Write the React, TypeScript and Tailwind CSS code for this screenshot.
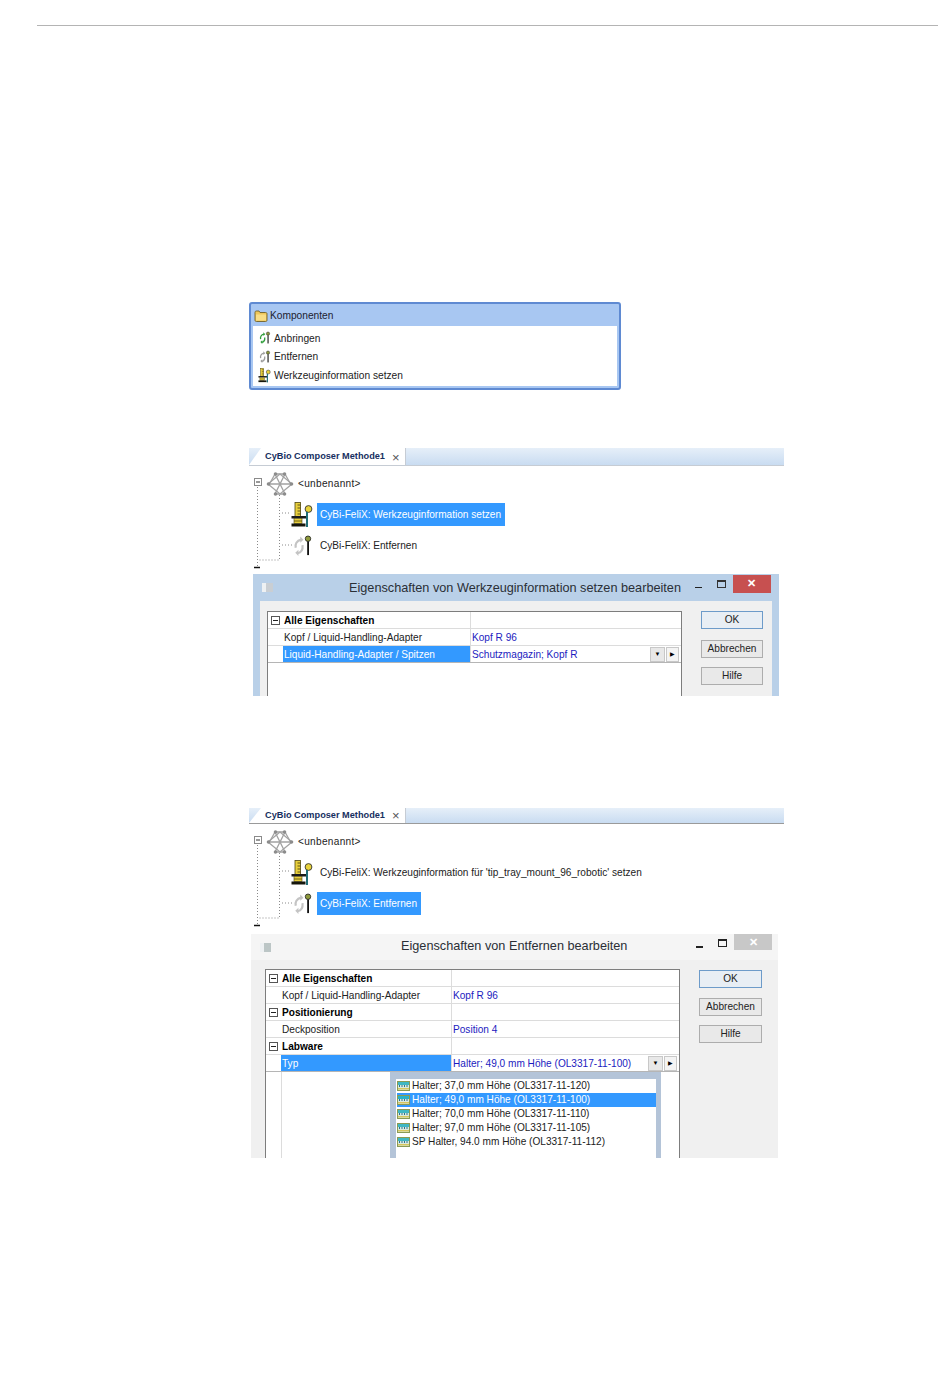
import React from 'react'

const font = "font-['Liberation_Sans',sans-serif]"

const PinIcon = ({ head = '#8f9a3c', stem = '#111111' }: { head?: string; stem?: string }) => (
  <>
    <circle cx="16.5" cy="4" r="3" fill={head} stroke="#222" strokeWidth="0.9" />
    <rect x="15.6" y="7" width="2" height="15" fill={stem} />
  </>
)

const ToolInfoIcon = ({ className }: { className: string }) => (
  <svg viewBox="0 0 22 26" className={className}>
    <rect x="4" y="0.500" width="5.500" height="14" fill="#e8cf3c" stroke="#4f4610" strokeWidth="0.8" />
    <path d="M6.500 3h3M6.500 6h3M6.500 9h3M6.500 12h3" stroke="#4f4610" strokeWidth="0.9" />
    <rect x="0.500" y="14" width="15" height="2.500" fill="#1a1a1a" />
    <rect x="3" y="16.500" width="8" height="5" fill="#e8cf3c" stroke="#4f4610" strokeWidth="0.6" />
    <path d="M3 19h8" stroke="#4f4610" strokeWidth="0.8" />
    <rect x="0.500" y="21.500" width="14" height="3" fill="#16160c" />
    <circle cx="17.500" cy="7" r="3.400" fill="#e8d23a" stroke="#333" strokeWidth="0.9" />
    <rect x="15" y="10" width="2" height="15" fill="#1f6e78" />
  </svg>
)

const RemoveIcon = ({ className, tone = '#c4c4c4' }: { className: string; tone?: string }) => (
  <svg viewBox="0 0 22 24" className={className}>
    <path d="M9 5C4 6 2 10 3 14" fill="none" stroke={tone} strokeWidth="2.4" />
    <path d="M8 1.500l3.500 3.500L8 8.500z" fill={tone} />
    <path d="M5 20c5-1 6-4 5.500-9" fill="none" stroke={tone} strokeWidth="2.4" />
    <path d="M6 23l-3.500-3.500L6 16z" fill={tone} />
    <PinIcon />
  </svg>
)

const NetworkIcon = () => (
  <svg viewBox="0 0 28 26" className="w-[28px] h-[26px] shrink-0">
    <g fill="none" stroke="#a3a3a3" strokeWidth="1.3">
      <path d="M14 3L2 13l12 10 12-10z" />
      <path d="M9 3h10M9 23h10M2 13h24M9 3l5 10 5-10M9 23l5-10 5 10M9 3L4 12M19 3l5 9" />
    </g>
    <g fill="#8c8c8c">
      <circle cx="9.500" cy="3" r="1.800" />
      <circle cx="18.500" cy="3" r="1.800" />
      <circle cx="9.500" cy="23" r="1.800" />
      <circle cx="18.500" cy="23" r="1.800" />
      <circle cx="2.500" cy="13" r="1.800" />
      <circle cx="25.500" cy="13" r="1.800" />
    </g>
  </svg>
)

const FolderIcon = () => (
  <svg viewBox="0 0 14 12" className="w-[14px] h-[12px] shrink-0">
    <path d="M1 2.500C1 1.500 1.500 1 2.500 1H5l1 1.500h5.500c1 0 1.500.5 1.500 1.500v6c0 1-.5 1.500-1.500 1.500h-9C1.500 11.500 1 11 1 10z" fill="#eec65a" stroke="#6f6128" strokeWidth="0.9" />
    <rect x="2" y="4.500" width="10" height="6" fill="#f8dd85" />
  </svg>
)

const HolderIcon = ({ active }: { active?: boolean }) => (
  <svg viewBox="0 0 13 10" className="w-[13px] h-[10px] shrink-0">
    <rect x="0.500" y="0.500" width="12" height="9" fill="#d9eadf" stroke="#8a9a55" />
    <rect x="1" y="1" width="11" height="3" fill={active ? '#27b3c9' : '#3fb7c4'} />
    <path d="M2.500 4v2M5 4v2M7.500 4v2M10 4v2" stroke="#31708f" />
    <rect x="1" y="7" width="11" height="1.500" fill="#d7c65e" />
  </svg>
)

const Palette = () => {
  const items = [
    { label: 'Anbringen', icon: <RemoveIcon className="w-[12px] h-[14px]" tone="#2f9d3a" /> },
    { label: 'Entfernen', icon: <RemoveIcon className="w-[12px] h-[14px]" tone="#9c9c9c" /> },
    { label: 'Werkzeuginformation setzen', icon: <ToolInfoIcon className="w-[13px] h-[15px]" /> },
  ]
  return (
    <div className="w-[372px] h-[88px] rounded-[3px] border-2 border-[#5f8ad2] bg-[#a8c7f2] flex flex-col">
      <div className="h-[22px] shrink-0 flex items-center gap-[2px] pl-[3px] pt-[2px] text-[10.2px] text-[#1c2230]">
        <FolderIcon />
        Komponenten
      </div>
      <div className="mx-[2px] h-[60px] bg-white flex flex-col pt-[3px] pl-[5px]">
        {items.map((item) => (
          <div key={item.label} className="h-[18.500px] flex items-center gap-[3px] text-[10.2px] text-[#222]">
            <span className="w-[13px] flex justify-center">{item.icon}</span>
            {item.label}
          </div>
        ))}
      </div>
    </div>
  )
}

const ComposerTree = ({ toolLabel, selected, compact }: { toolLabel: string; selected: 'tool' | 'remove'; compact?: boolean }) => (
  <div className="w-[535px]">
    <div className={`flex bg-gradient-to-b from-[#e6eff9] to-[#c9dcf1] border-b ${compact ? 'h-[16px] border-[#9a9a9a]' : 'h-[18px] border-[#c6ccd4]'}`}>
      <div className={`w-[157px] bg-white flex items-center pl-[16px] [clip-path:polygon(12px_0,100%_0,100%_100%,0_100%)] border-r border-[#c6ccd4] ${compact ? 'h-[15px]' : 'h-[17px] pt-px'}`}>
        <span className="text-[9.2px] font-bold text-[#17305f]">CyBio Composer Methode1</span>
        <span className="ml-[7px] text-[13px] leading-none text-[#555]">×</span>
      </div>
    </div>
    <div className="relative h-[108px] pt-[2px] text-[10.1px] text-[#222]">
      <svg viewBox="0 0 60 108" className="absolute left-0 top-0 w-[60px] h-[108px]">
        <g fill="none" stroke="#8a8a8a" strokeDasharray="1 2">
          <path d="M8.500 21V100M30.500 29V94H9M33 47H42M33 79H44" />
        </g>
        <rect x="5.500" y="12.500" width="7" height="7" fill="#fff" stroke="#8a8a8a" />
        <path d="M7 16h4" stroke="#333" />
        <path d="M5 101.500h6" stroke="#111" strokeWidth="1.500" />
      </svg>
      <div className="relative h-[31px] flex items-center pl-[17px]">
        <NetworkIcon />
        <span className="ml-[4px] tracking-[0.3px]">&lt;unbenannt&gt;</span>
      </div>
      <div className="relative h-[31px] flex items-center pl-[42px]">
        <ToolInfoIcon className="w-[22px] h-[26px] shrink-0" />
        <span className={`ml-[4px] h-[23px] flex items-center pl-[3px] pr-[4px] ${selected === 'tool' ? 'bg-[#3399ff] text-white' : ''}`}>
          {toolLabel}
        </span>
      </div>
      <div className="relative h-[31px] flex items-center pl-[44px]">
        <RemoveIcon className="w-[20px] h-[22px] shrink-0" />
        <span className={`ml-[4px] h-[23px] flex items-center pl-[3px] pr-[4px] ${selected === 'remove' ? 'bg-[#3399ff] text-white' : ''}`}>
          CyBi-FeliX: Entfernen
        </span>
      </div>
    </div>
  </div>
)

type Row = { name: string; value?: string; head?: boolean; active?: boolean; dropdown?: boolean }

const PropertyGrid = ({ rows, nameClass, className, children }: { rows: Row[]; nameClass: string; className: string; children?: React.ReactNode }) => (
  <div className={`relative bg-white border border-b-0 border-[#7d7d7d] text-[10.1px] text-[#222] ${className}`}>
    {rows.map((row) => (
      <div key={row.name} className={`h-[17px] flex border-b ${row.active ? 'border-[#b5b5b5]' : 'border-[#dcdcdc]'}`}>
        <div className="w-[15px] shrink-0 flex items-center justify-center">
          {row.head && (
            <span className="w-[9px] h-[9px] border border-[#555] flex items-center justify-center">
              <span className="w-[5px] h-px bg-[#222]" />
            </span>
          )}
        </div>
        <div className={`${nameClass} shrink-0 pt-px flex items-center border-r border-[#dcdcdc] ${row.head ? 'font-bold text-black' : ''} ${row.active ? 'bg-[#3399ff] text-white' : ''}`}>
          {row.name}
        </div>
        <div className="flex-1 pl-px pt-px flex items-center text-[#1c1cc0]">
          {row.value}
          {row.dropdown && (
            <div className="ml-auto mr-[2px] flex gap-px">
              <span className="w-[15px] h-[15px] bg-[#e8e8e8] border border-[#c8c8c8] flex items-center justify-center text-[6px] text-black">▼</span>
              <span className="w-[13px] h-[15px] bg-[#f4f4f4] border border-[#c8c8c8] flex items-center justify-center text-[6px] text-black">▶</span>
            </div>
          )}
        </div>
      </div>
    ))}
    {children}
  </div>
)

const DialogButtons = ({ gaps, className }: { gaps: string[]; className: string }) => (
  <div className={`flex flex-col ${className}`}>
    {['OK', 'Abbrechen', 'Hilfe'].map((label, i) => (
      <div
        key={label}
        className={`${gaps[i]} h-[18px] flex items-center justify-center text-[10.1px] text-[#222] border ${i === 0 ? 'bg-[#e8eef4] border-[#6d9bc9]' : 'bg-[#e9e9e9] border-[#adadad]'}`}
      >
        {label}
      </div>
    ))}
  </div>
)

const holders = [
  'Halter; 37,0 mm Höhe (OL3317-11-120)',
  'Halter; 49,0 mm Höhe (OL3317-11-100)',
  'Halter; 70,0 mm Höhe (OL3317-11-110)',
  'Halter; 97,0 mm Höhe (OL3317-11-105)',
  'SP Halter, 94.0 mm Höhe (OL3317-11-112)',
]

export default function App() {
  return (
    <div className={`w-[950px] h-[1398px] bg-white overflow-hidden pt-[25px] ${font}`}>
      <div className="ml-[37px] w-[901px] h-px bg-[#b4b4b4]" />

      <div className="ml-[249px] mt-[276px]">
        <Palette />
      </div>

      <div className="ml-[249px] mt-[58px]">
        <ComposerTree toolLabel="CyBi-FeliX: Werkzeuginformation setzen" selected="tool" />
      </div>

      {/* Werkzeuginformation dialog */}
      <div className="ml-[253px] w-[526px] h-[122px] bg-[#b9d0e8] flex flex-col">
        <div className="h-[27px] shrink-0 flex items-center">
          <span className="ml-[9px] w-[11px] h-[9px] bg-[#c9ced3] border-l-[4px] border-[#eef1f3]" />
          <span className="ml-[76px] pt-[2px] text-[12.7px] text-[#2a2f36]">Eigenschaften von Werkzeuginformation setzen bearbeiten</span>
          <span className="ml-[14px] w-[7px] h-px bg-[#222]" />
          <span className="ml-[15px] w-[9px] h-[8px] -mt-[8px] border border-[#333] border-t-2" />
          <span className="ml-[7px] w-[38px] h-[18px] -mt-[8px] bg-[#c75050] flex items-center justify-center text-white text-[11px] font-bold">✕</span>
        </div>
        <div className="mx-[7px] flex-1 bg-[#f0f0f0] flex pt-[10px] pl-[7px]">
          <PropertyGrid
            className="w-[415px] h-[85px]"
            nameClass="w-[188px] pl-px"
            rows={[
              { name: 'Alle Eigenschaften', head: true },
              { name: 'Kopf / Liquid-Handling-Adapter', value: 'Kopf R 96' },
              { name: 'Liquid-Handling-Adapter / Spitzen', value: 'Schutzmagazin; Kopf R', active: true, dropdown: true },
            ]}
          />
          <DialogButtons className="ml-[19px] w-[62px]" gaps={['', 'mt-[11px]', 'mt-[9px]']} />
        </div>
      </div>

      <div className="ml-[249px] mt-[112px]">
        <ComposerTree toolLabel="CyBi-FeliX: Werkzeuginformation für 'tip_tray_mount_96_robotic' setzen" selected="remove" compact />
      </div>

      {/* Entfernen dialog */}
      <div className="ml-[251px] mt-[2px] w-[527px] h-[224px] bg-[#f0f0f0] flex flex-col">
        <div className="h-[26px] shrink-0 flex items-center bg-[#f5f5f5]">
          <span className="ml-[9px] w-[11px] h-[9px] bg-[#bcc6c6] border-l-[4px] border-[#eef1f3]" />
          <span className="ml-[130px] text-[12.7px] text-[#2a2f36]">Eigenschaften von Entfernen bearbeiten</span>
          <span className="ml-[69px] w-[7px] h-[2px] bg-[#222]" />
          <span className="ml-[15px] w-[9px] h-[8px] -mt-[8px] border border-[#222] border-t-2" />
          <span className="ml-[7px] w-[38px] h-[16px] -mt-[10px] bg-[#c8c8c8] flex items-center justify-center text-white text-[11px] font-bold">✕</span>
        </div>
        <div className="mx-[7px] flex-1 flex pt-[9px] pl-[7px]">
          <PropertyGrid
            className="w-[415px] h-[189px]"
            nameClass="w-[171px] pl-px"
            rows={[
              { name: 'Alle Eigenschaften', head: true },
              { name: 'Kopf / Liquid-Handling-Adapter', value: 'Kopf R 96' },
              { name: 'Positionierung', head: true },
              { name: 'Deckposition', value: 'Position 4' },
              { name: 'Labware', head: true },
              { name: 'Typ', value: 'Halter; 49,0 mm Höhe (OL3317-11-100)', active: true, dropdown: true },
            ]}
          >
            <div className="absolute left-[15px] top-[102px] bottom-0 w-px bg-[#dcdcdc]" />
            {/* open dropdown list */}
            <div className="absolute left-[124px] top-[102px] w-[271px] bottom-0 bg-[#b4c4d8] pl-[6px] pr-[5px] pt-[7px]">
              <div className="h-full bg-white flex flex-col pl-px text-[#222]">
                {holders.map((label, i) => (
                  <div key={label} className={`h-[14px] flex items-center gap-[2px] ${i === 1 ? 'bg-[#3399ff] text-white' : ''}`}>
                    <HolderIcon active={i === 1} />
                    {label}
                  </div>
                ))}
              </div>
            </div>
          </PropertyGrid>
          <DialogButtons className="ml-[19px] w-[63px]" gaps={['mt-px', 'mt-[10px]', 'mt-[9px]']} />
        </div>
      </div>
    </div>
  )
}
